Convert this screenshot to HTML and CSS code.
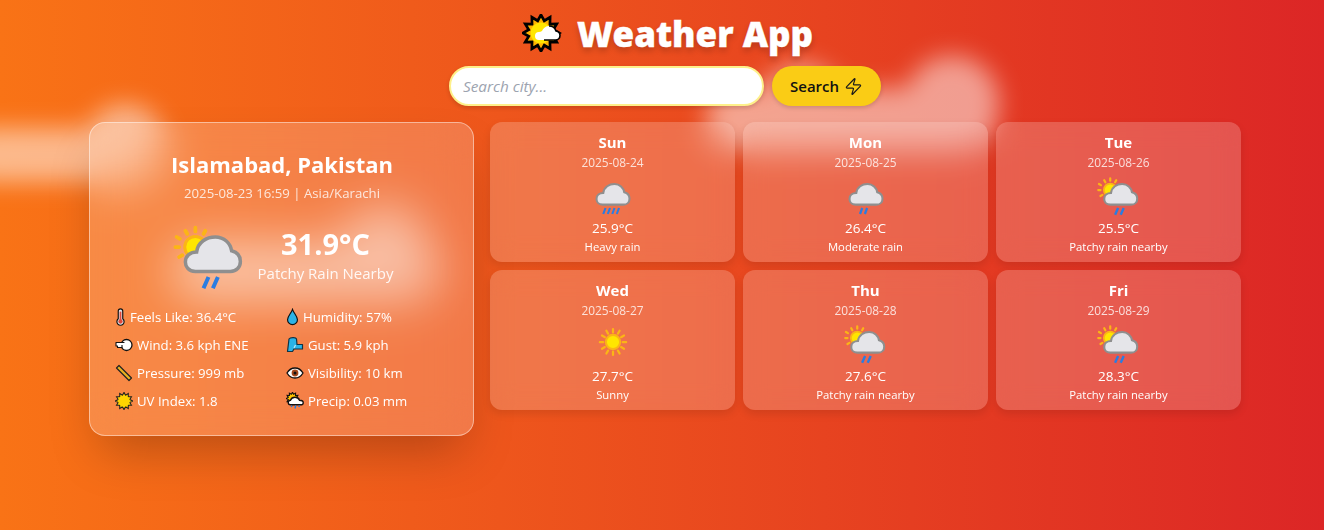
FILE: index.html
```html
<!DOCTYPE html>
<html lang="en">

<head>
    <meta charset="UTF-8">
    <meta name="viewport" content="width=device-width, initial-scale=1.0">
    <title>Weather App</title>
    <link rel="stylesheet" href="styles.css">
</head>

<body>
    <svg class="sprites" aria-hidden="true">
        <defs>
            <polygon id="star" points="12,.5 14.07,4.27 17.75,2.04 17.66,6.34 21.96,6.25 19.73,9.93 23.5,12 19.73,14.07 21.96,17.75 17.66,17.66 17.75,21.96 14.07,19.73 12,23.5 9.93,19.73 6.25,21.96 6.34,17.66 2.04,17.75 4.27,14.07 .5,12 4.27,9.93 2.04,6.25 6.34,6.34 6.25,2.04 9.93,4.27" />
            <path id="cloud" d="M23 43.5C17 43.5 15 39 15 36C15 31 19 28 24 28C25 20 32 16 39 16C46 16 51 21 52 27C56 28 59 31 59 35.5C59 40 56 43.5 51 43.5Z" fill="#e5e5e9" stroke="#8f8f8f" stroke-width="2.8" />
            <g id="sun-small">
                <g stroke="#fbb516" stroke-width="3" stroke-linecap="round">
                    <path d="M15 11l1.500 2.600M23 8.500v3M31 11l-1.500 2.600M8 16l2.600 1.500M7 24h3M10 32l2.600-1.500" />
                </g>
                <circle cx="23" cy="24" r="8.500" fill="#ffe600" stroke="#fbb516" stroke-width="2.400" />
            </g>
            <symbol id="patchy-rain" viewBox="0 0 64 64">
                <g transform="translate(-2.700 0)">
                    <use href="#sun-small" />
                    <use href="#cloud" />
                    <path d="M29.500 57l4-9M37 57l4-9" stroke="#2a7de1" stroke-width="3.200" />
                </g>
            </symbol>
            <symbol id="moderate-rain" viewBox="0 0 64 64">
                <use href="#cloud" x="-5" />
                <path d="M24 56l3-8M30.500 56l3-8" stroke="#2a7de1" stroke-width="3" />
            </symbol>
            <symbol id="heavy-rain" viewBox="0 0 64 64">
                <use href="#cloud" x="-5" />
                <path d="M19 56l3-8M25 56l3-8M31 56l3-8M37 56l3-8" stroke="#2a7de1" stroke-width="2.800" />
            </symbol>
            <symbol id="sunny" viewBox="0 0 64 64">
                <g stroke="#fbb516" stroke-width="3" stroke-linecap="round">
                    <path d="M32 12v4.500M32 42v4.500M14.500 29.500H19M45 29.500h4.500M23.200 14.300l2.200 3.900M38.600 40.800l2.200 3.900M40.800 14.300l-2.200 3.900M25.400 40.800l-2.200 3.900M17.300 20.700l3.900 2.200M42.800 36.100l3.900 2.200M46.700 20.700l-3.900 2.200M21.200 36.100l-3.900 2.200" />
                </g>
                <circle cx="32" cy="29.300" r="9.500" fill="#ffe600" stroke="#fbb516" stroke-width="2.800" />
            </symbol>
        </defs>
    </svg>

    <div class="sky" aria-hidden="true">
        <div class="cloud cloud-left"><span class="band"></span><span class="bump"></span></div>
        <div class="cloud cloud-mid"><span class="band"></span><span class="bump"></span></div>
        <div class="cloud cloud-right"><span class="band"></span><span class="bump"></span><span class="bump bump-two"></span></div>
    </div>

    <main class="maincontent">
        <h1 class="app-title">
            <svg class="title-icon" viewBox="0 0 40 38">
                <g transform="scale(1.583)"><use href="#star" fill="#ffb300" stroke="#000" stroke-width="1.700" /></g>
                <circle cx="19" cy="19" r="10.500" fill="#ffe600" />
                <path d="M17 26a4 4 0 0 1 0-8c1 0 2-.5 3-1 1-3 4-5 7-5 3.500 0 6 2 7 5 3 .5 4 2.500 4 4.500 0 2.500-2 4.500-4.500 4.500z" fill="#fff" />
                <path d="M27 12c3.500 0 6 2 7 5 3 .5 4 2.500 4 4.500 0 2.500-2 4.500-4.500 4.500H22" fill="none" stroke="#000" stroke-width="1.600" />
            </svg>
            <span>Weather App</span>
        </h1>

        <form class="search-form">
            <input class="search-input" type="text" placeholder="Search city...">
            <button class="search-button" type="button">
                Search
                <svg class="zap" viewBox="0 0 24 24" fill="none" stroke="#1a1a1a" stroke-width="1.500" stroke-linejoin="round">
                    <path d="M4 14a1 1 0 0 1-.78-1.630l9.900-10.200a.500.500 0 0 1 .860.460l-1.920 6.020A1 1 0 0 0 13 10h7a1 1 0 0 1 .780 1.630l-9.900 10.200a.500.500 0 0 1-.860-.460l1.920-6.020A1 1 0 0 0 11 14z" />
                </svg>
            </button>
        </form>

        <div class="content">
            <section class="current-card">
                <h2 class="city">Islamabad, Pakistan</h2>
                <p class="local-time">2025-08-23 16:59 | Asia/Karachi</p>
                <div class="now">
                    <svg class="now-icon"><use href="#patchy-rain" /></svg>
                    <div class="now-text">
                        <div class="now-temp">31.9°C</div>
                        <div class="now-cond">Patchy Rain Nearby</div>
                    </div>
                </div>
                <div class="stats">
                    <div class="stat">
                        <svg class="stat-icon narrow" viewBox="0 0 12 20">
                            <path d="M3.500 12V3.500a2.500 2.500 0 0 1 5 0V12a4 4 0 1 1-5 0z" fill="#dfe9ee" stroke="#111" stroke-width="1.300" />
                            <circle cx="6" cy="15" r="2.400" fill="#e0483a" />
                            <path d="M6 4v10" stroke="#e0483a" stroke-width="2" />
                        </svg>
                        Feels Like: 36.4°C
                    </div>
                    <div class="stat">
                        <svg class="stat-icon drop" viewBox="0 0 14 20">
                            <path d="M7 1.500C5.500 6 1.500 9 1.500 13a5.500 5.500 0 0 0 11 0C12.500 9 8.500 6 7 1.500z" fill="#2bb3e6" stroke="#111" stroke-width="1.300" />
                        </svg>
                        Humidity: 57%
                    </div>
                    <div class="stat">
                        <svg class="stat-icon" viewBox="0 0 18 18">
                            <circle cx="11.500" cy="9" r="5.500" fill="#fff" stroke="#111" stroke-width="1.300" />
                            <path d="M1 6.500h8v2h-2v3H2.500v-1.500H1z" fill="#fff" stroke="#111" stroke-width="1.100" stroke-linejoin="round" />
                            <path d="M6 8h5" stroke="#fff" stroke-width="2" />
                        </svg>
                        Wind: 3.6 kph ENE
                    </div>
                    <div class="stat">
                        <svg class="stat-icon" viewBox="0 0 18 18">
                            <path d="M3 3C4 1.500 10 1 10.500 3L11 8.500h5.500V13H8l-1.500 2.500H1.500z" fill="#2bb3e6" stroke="#134" stroke-width="1.200" stroke-linejoin="round" />
                            <path d="M8 12l1.500-3" stroke="#bde9f7" stroke-width="1.200" />
                        </svg>
                        Gust: 5.9 kph
                    </div>
                    <div class="stat">
                        <svg class="stat-icon" viewBox="0 0 18 18">
                            <path d="M1.500 4L4 1.500 16.500 14 14 16.500z" fill="#e8b020" stroke="#222" stroke-width="1.200" stroke-linejoin="round" />
                        </svg>
                        Pressure: 999 mb
                    </div>
                    <div class="stat">
                        <svg class="stat-icon" viewBox="0 0 18 18">
                            <path d="M1 9c2-3.500 5-5 8-5s6 1.500 8 5c-2 3.500-5 5-8 5s-6-1.500-8-5z" fill="#fff" stroke="#111" stroke-width="1.300" />
                            <circle cx="9" cy="9" r="3.400" fill="#a5481c" />
                            <circle cx="9" cy="9" r="1.500" fill="#111" />
                        </svg>
                        Visibility: 10 km
                    </div>
                    <div class="stat">
                        <svg class="stat-icon" viewBox="0 0 24 24">
                            <use href="#star" fill="#ffd400" stroke="#222" stroke-width="1.400" />
                            <circle cx="12" cy="12" r="7.500" fill="#ffd400" />
                        </svg>
                        UV Index: 1.8
                    </div>
                    <div class="stat">
                        <svg class="stat-icon" viewBox="0 0 24 24">
                            <use href="#star" transform="scale(.72)" fill="#ffc400" stroke="#111" stroke-width="2" />
                            <path d="M6 17a3 3 0 0 1 0-6c1-3 3-4 6-4 3 0 5 1.500 6 4 3 0 5 1.500 5 3.500 0 2-2 2.500-4 2.500z" fill="#fff" stroke="#111" stroke-width="1.800" />
                            <path d="M7 20l1-2M12 22l1-4M17 20l1-2" stroke="#2a7de1" stroke-width="2" />
                        </svg>
                        Precip: 0.03 mm
                    </div>
                </div>
            </section>

            <section class="forecast">
                <article class="day-card">
                    <h3 class="day-name">Sun</h3>
                    <p class="day-date">2025-08-24</p>
                    <svg class="day-icon"><use href="#heavy-rain" /></svg>
                    <p class="day-temp">25.9°C</p>
                    <p class="day-cond">Heavy rain</p>
                </article>
                <article class="day-card">
                    <h3 class="day-name">Mon</h3>
                    <p class="day-date">2025-08-25</p>
                    <svg class="day-icon"><use href="#moderate-rain" /></svg>
                    <p class="day-temp">26.4°C</p>
                    <p class="day-cond">Moderate rain</p>
                </article>
                <article class="day-card">
                    <h3 class="day-name">Tue</h3>
                    <p class="day-date">2025-08-26</p>
                    <svg class="day-icon"><use href="#patchy-rain" /></svg>
                    <p class="day-temp">25.5°C</p>
                    <p class="day-cond">Patchy rain nearby</p>
                </article>
                <article class="day-card">
                    <h3 class="day-name">Wed</h3>
                    <p class="day-date">2025-08-27</p>
                    <svg class="day-icon"><use href="#sunny" /></svg>
                    <p class="day-temp">27.7°C</p>
                    <p class="day-cond">Sunny</p>
                </article>
                <article class="day-card">
                    <h3 class="day-name">Thu</h3>
                    <p class="day-date">2025-08-28</p>
                    <svg class="day-icon"><use href="#patchy-rain" /></svg>
                    <p class="day-temp">27.6°C</p>
                    <p class="day-cond">Patchy rain nearby</p>
                </article>
                <article class="day-card">
                    <h3 class="day-name">Fri</h3>
                    <p class="day-date">2025-08-29</p>
                    <svg class="day-icon"><use href="#patchy-rain" /></svg>
                    <p class="day-temp">28.3°C</p>
                    <p class="day-cond">Patchy rain nearby</p>
                </article>
            </section>
        </div>
    </main>
</body>

</html>
```

FILE: styles.css
```css
* {
    box-sizing: border-box;
    margin: 0;
    padding: 0;
}

html,
body {
    height: 530px;
    overflow: hidden;
}

body {
    font-family: "Open Sans", "Noto Sans", sans-serif;
    color: #fff;
    background: linear-gradient(to right, #f97316, #dc2626);
}

.sprites {
    position: absolute;
    width: 0;
    height: 0;
}

/* drifting clouds behind everything */
.sky {
    position: absolute;
    inset: 0;
    overflow: hidden;
}

.cloud {
    position: absolute;
    filter: blur(12px);
    opacity: .5;
}

.cloud span {
    position: absolute;
    background: #fff;
    border-radius: 50%;
}

.cloud-left {
    left: -40px;
    top: 100px;
    width: 210px;
    height: 90px;
}

.cloud-left .band {
    left: 0;
    top: 28px;
    width: 190px;
    height: 54px;
    border-radius: 27px;
}

.cloud-left .bump {
    left: 125px;
    top: 4px;
    width: 80px;
    height: 80px;
}

.cloud-mid {
    left: 170px;
    top: 200px;
    width: 280px;
    height: 110px;
}

.cloud-mid .band {
    left: 0;
    top: 40px;
    width: 270px;
    height: 62px;
    border-radius: 31px;
}

.cloud-mid .bump {
    left: 170px;
    top: 5px;
    width: 90px;
    height: 90px;
}

.cloud-right {
    left: 700px;
    top: 50px;
    width: 310px;
    height: 120px;
}

.cloud-right .band {
    left: 6px;
    top: 38px;
    width: 290px;
    height: 62px;
    border-radius: 31px;
}

.cloud-right .bump {
    left: 205px;
    top: 6px;
    width: 94px;
    height: 94px;
}

.cloud-right .bump-two {
    left: 60px;
    top: 14px;
    width: 84px;
    height: 84px;
}

.maincontent {
    position: relative;
    padding: 13px 0 0 6px;
}

.app-title {
    display: flex;
    justify-content: center;
    align-items: center;
    gap: 15px;
    height: 40px;
    padding-left: 5px;
    font-family: "Noto Sans", sans-serif;
    font-size: 35px;
    font-weight: 900;
    -webkit-text-stroke: .4px #fff;
    text-shadow: 0 4px 6px rgba(0, 0, 0, .2);
}

.title-icon {
    width: 40px;
    height: 38px;
}

.search-form {
    display: flex;
    justify-content: center;
    gap: 8px;
    margin-top: 13px;
}

.search-input {
    width: 315px;
    height: 40px;
    padding: 0 12px;
    border: 2px solid #fef08a;
    border-radius: 20px;
    outline: none;
    font-family: inherit;
    font-size: 15.300px;
    color: #111;
    background: #fff;
    box-shadow: 0 2px 4px rgba(0, 0, 0, .15);
}

.search-input::placeholder {
    color: #9ca3af;
    font-style: italic;
}

.search-button {
    display: flex;
    align-items: center;
    gap: 5px;
    width: 109px;
    height: 40px;
    padding: 0 18px;
    border: none;
    border-radius: 20px;
    font-family: inherit;
    font-size: 15px;
    font-weight: 600;
    color: #111;
    background: #facc15;
    box-shadow: 0 2px 4px rgba(0, 0, 0, .15);
}

.zap {
    width: 19px;
    height: 19px;
}

.content {
    display: flex;
    gap: 16px;
    align-items: flex-start;
    width: 1152px;
    margin: 16px auto 0;
}

.current-card {
    flex: 0 0 384px;
    height: 314px;
    padding: 25px 24px 0 25px;
    border: 1px solid rgba(255, 255, 255, .45);
    border-radius: 16px;
    background: rgba(255, 255, 255, .2);
    box-shadow: 0 25px 50px -12px rgba(0, 0, 0, .25);
    backdrop-filter: blur(20px);
}

.city {
    font-size: 22px;
    line-height: 32px;
    font-weight: 700;
    text-align: center;
}

.local-time {
    margin-top: 3px;
    font-size: 13.200px;
    line-height: 20px;
    text-align: center;
    color: rgba(255, 255, 255, .8);
}

.now {
    display: flex;
    justify-content: center;
    align-items: center;
    gap: 8px;
    margin-top: 14px;
    height: 80px;
    padding-right: 1px;
}

.now-icon {
    width: 80px;
    height: 80px;
}

.now-text {
    margin-top: -5px;
    text-align: center;
}

.now-temp {
    font-size: 29px;
    line-height: 36px;
    font-weight: 700;
}

.now-cond {
    font-size: 15px;
    line-height: 22px;
    color: rgba(255, 255, 255, .9);
}

.stats {
    display: grid;
    grid-template-columns: 163px 163px;
    gap: 8px;
    margin-top: 10px;
}

.stat {
    display: flex;
    align-items: center;
    gap: 4px;
    height: 20px;
    font-size: 13.200px;
    white-space: nowrap;
}

.stat-icon {
    flex: none;
    width: 18px;
    height: 18px;
}

.stat-icon.narrow {
    width: 11px;
}

.stat-icon.drop {
    width: 13px;
}

.forecast {
    flex: 1;
    display: grid;
    grid-template-columns: repeat(3, 1fr);
    gap: 8px;
}

.day-card {
    display: flex;
    flex-direction: column;
    align-items: center;
    height: 140px;
    padding-top: 10px;
    border-radius: 12px;
    background: rgba(255, 255, 255, .2);
    box-shadow: 0 4px 8px rgba(0, 0, 0, .1);
    backdrop-filter: blur(12px);
}

.day-name {
    font-size: 15px;
    line-height: 20px;
    font-weight: 700;
}

.day-date {
    font-size: 11.900px;
    line-height: 20px;
    color: rgba(255, 255, 255, .8);
}

.day-icon {
    width: 48px;
    height: 48px;
    margin-bottom: -2px;
}

.day-temp {
    font-size: 13.500px;
    line-height: 20px;
}

.day-cond {
    font-size: 11.300px;
    line-height: 18px;
    font-weight: 500;
}
```
